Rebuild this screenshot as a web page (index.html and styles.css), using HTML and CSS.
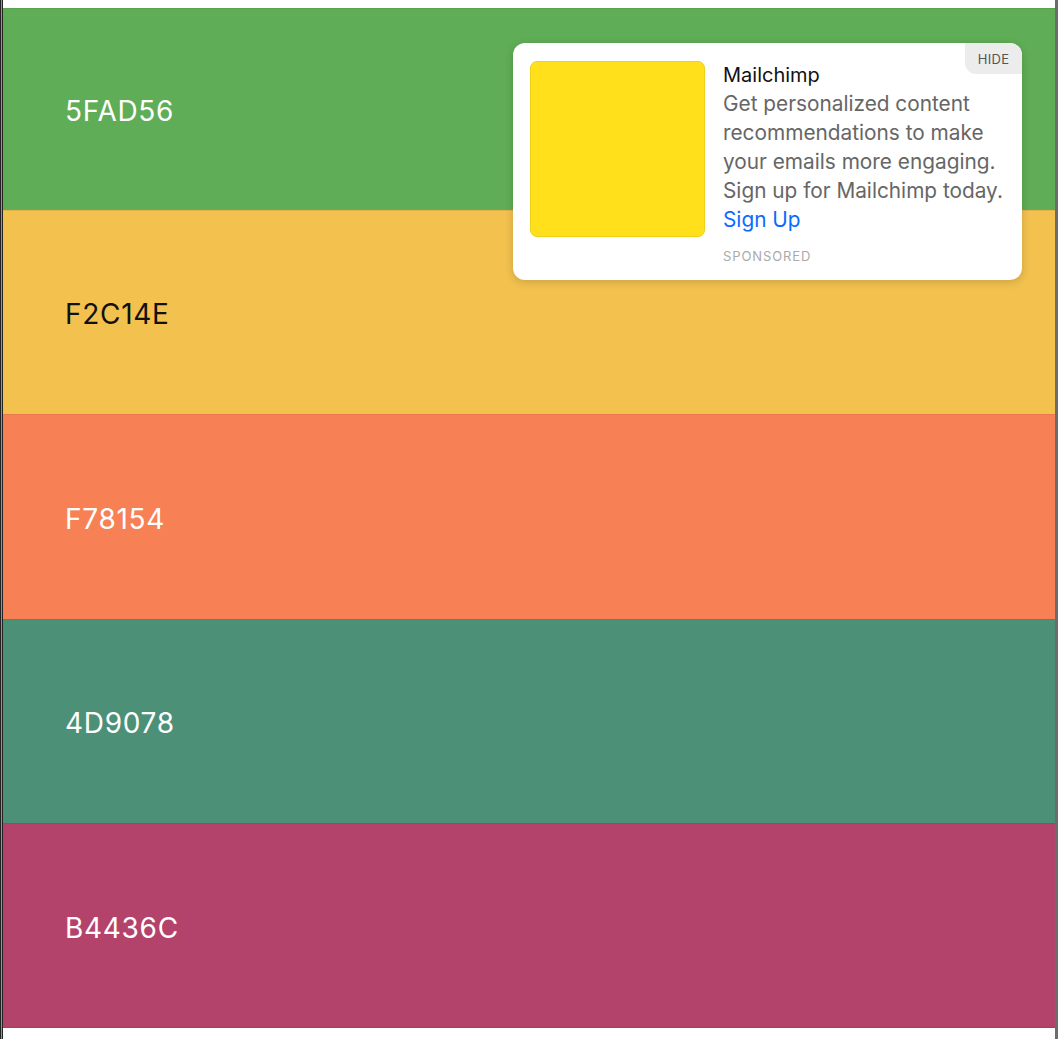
FILE: index.html
```html
<!DOCTYPE html>
<html lang="en">
<head>
<meta charset="utf-8">
<title>Palette</title>
<link rel="stylesheet" href="styles.css">
</head>
<body>
<main class="palette">
  <section class="band band-green"><span class="hex">5FAD56</span></section>
  <section class="band band-yellow"><span class="hex hex-dark">F2C14E</span></section>
  <section class="band band-orange"><span class="hex">F78154</span></section>
  <section class="band band-teal"><span class="hex">4D9078</span></section>
  <section class="band band-pink"><span class="hex">B4436C</span></section>

  <aside class="ad">
    <div class="ad-image"></div>
    <div class="ad-text">
      <div class="ad-title">Mailchimp</div>
      <p class="ad-body">Get personalized content recommendations to make your emails more engaging. Sign up for Mailchimp today.<br><a class="ad-link" href="#">Sign Up</a></p>
      <div class="ad-sponsored">SPONSORED</div>
    </div>
    <button class="ad-hide">HIDE</button>
  </aside>
</main>
</body>
</html>
```

FILE: styles.css
```css
html {
  min-height: 100%;
  background: linear-gradient(to right, #232323 0 1px, #48b3c2 1px 2px, #232323 2px 3px, #ffffff 3px calc(100% - 3px), #6c6c6c calc(100% - 3px));
}

body {
  margin: 0;
  padding: 8px 3px 11px 3px;
  font-family: Inter, "Noto Sans", sans-serif;
}

.palette {
  position: relative;
  display: flex;
  flex-direction: column;
}

.band {
  height: 204px;
  display: flex;
  align-items: center;
  padding-left: 62px;
  box-shadow: inset 0 1px 0 rgba(0, 0, 0, 0.06);
}

.band-green { background: #5fad56; height: 202px; }
.band-yellow { background: #f2c14e; height: 204px; }
.band-orange { background: #f78154; height: 205px; }
.band-teal { background: #4d9078; height: 204px; }
.band-pink { background: #b4436c; height: 205px; box-shadow: inset 0 1px 0 rgba(0,0,0,0.06), inset 0 -1px 0 rgba(0,0,0,0.08); }

.hex {
  color: #ffffff;
  font-size: 28px;
  letter-spacing: 0.7px;
  line-height: 1;
  margin-top: 4px;
}

.hex-dark { color: #111111; }

.ad {
  position: absolute;
  top: 35px;
  left: 510px;
  width: 509px;
  height: 237px;
  box-sizing: border-box;
  background: #ffffff;
  border-radius: 12px;
  box-shadow: 0 2px 8px rgba(0, 0, 0, 0.16);
  padding: 18px 8px 18px 17px;
  display: flex;
  gap: 18px;
}

.ad-image {
  flex: 0 0 auto;
  width: 175px;
  height: 176px;
  box-sizing: border-box;
  background: #ffe01b;
  border: 1px solid #ecd21a;
  border-radius: 7px;
}

.ad-text {
  display: flex;
  flex-direction: column;
  padding-top: 1px;
}

.ad-title {
  font-size: 20px;
  line-height: 27px;
  color: #111111;
}

.ad-body {
  margin: 0;
  font-size: 20.8px;
  line-height: 29px;
  color: #666666;
}

.ad-link {
  color: #0a6cff;
  text-decoration: none;
}

.ad-sponsored {
  margin-top: 14px;
  font-size: 13px;
  line-height: 16px;
  letter-spacing: 0.9px;
  color: #aaaaaa;
}

.ad-hide {
  position: absolute;
  top: 0;
  right: 0;
  width: 57px;
  height: 31px;
  border: 0;
  padding: 0;
  background: #ececec;
  border-radius: 0 12px 0 11px;
  font-family: Inter, "Noto Sans", sans-serif;
  font-size: 13px;
  color: #555555;
  letter-spacing: 0.3px;
  cursor: pointer;
}
```
